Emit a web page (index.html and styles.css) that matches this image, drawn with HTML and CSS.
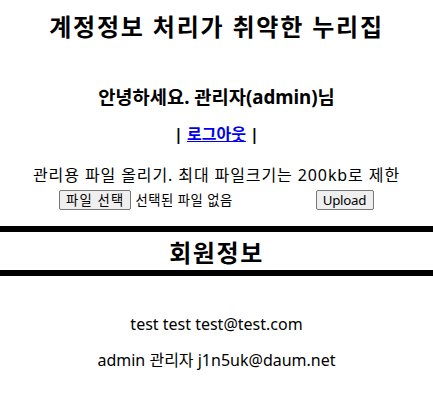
FILE: index.html
```html
<!DOCTYPE html>
<html lang="ko">
<head>
<meta charset="utf-8">
<title>계정정보 처리가 취약한 누리집</title>
<link rel="stylesheet" href="styles.css">
</head>
<body>
<div class="page">
  <h2 class="title">계정정보 처리가 취약한 누리집</h2>
  <h3 class="greet">안녕하세요. 관리자(admin)님</h3>
  <p class="logout">| <a href="#">로그아웃</a> |</p>
  <p class="notice">관리용 파일 올리기. 최대 파일크기는 200kb로 제한</p>
  <form class="upload">
    <span class="file">
      <button type="button" class="btn btn-ko">파일 선택</button>
      <span class="file-name">선택된 파일 없음</span>
    </span>
    <button type="button" class="btn btn-en">Upload</button>
  </form>
  <hr class="rule rule-top">
  <h2 class="section">회원정보</h2>
  <hr class="rule">
  <div class="members">
    <p class="member">test test test@test.com</p>
    <p class="member">admin 관리자 j1n5uk@daum.net</p>
  </div>
</div>
</body>
</html>
```
FILE: styles.css
```css
html, body {
  margin: 0;
  padding: 0;
  background: #fff;
}
body {
  font-family: "Noto Sans", "Noto Sans CJK KR", sans-serif;
  color: #000;
  font-size: 16px;
}
.page {
  display: flex;
  flex-direction: column;
  align-items: center;
  text-align: center;
}
.title {
  margin: 11px 0 0;
  font-size: 24px;
  line-height: 32px;
  font-weight: 700;
  letter-spacing: 1.8px;
}
.greet {
  margin: 41px 0 0;
  font-size: 18.72px;
  line-height: 26px;
  font-weight: 700;
}
.logout {
  margin: 13px 0 0;
  font-weight: 700;
  line-height: 22px;
}
.logout a {
  color: #0000ee;
  text-decoration: underline;
}
.notice {
  margin: 19px 0 0;
  line-height: 22px;
  letter-spacing: 0.9px;
}
.upload {
  margin: 3px 0 0;
  display: flex;
  align-items: center;
  gap: 83px;
  height: 21px;
}
.file {
  display: flex;
  align-items: center;
  gap: 4px;
  font-size: 13.33px;
  letter-spacing: 0.5px;
}
.btn {
  font-family: inherit;
  font-size: 13.33px;
  height: 20px;
  padding: 0 6px;
  line-height: 18px;
  background: #efefef;
  border: 1px solid #767676;
  border-radius: 2px;
  color: #000;
}
.btn-ko {
  letter-spacing: 1.2px;
}
.btn-en {
  letter-spacing: -0.3px;
  padding: 0 7px 0 6px;
}
.rule {
  align-self: stretch;
  margin: 0;
  border: 0;
  height: 6px;
  background: #000;
}
.rule-top {
  margin-top: 16px;
}
.section {
  margin: 6px 0 2px;
  font-size: 24px;
  line-height: 30px;
  font-weight: 700;
  letter-spacing: 1.6px;
}
.members {
  margin-top: 37px;
  display: flex;
  flex-direction: column;
  gap: 14px;
}
.member {
  margin: 0;
  line-height: 22px;
}
```
